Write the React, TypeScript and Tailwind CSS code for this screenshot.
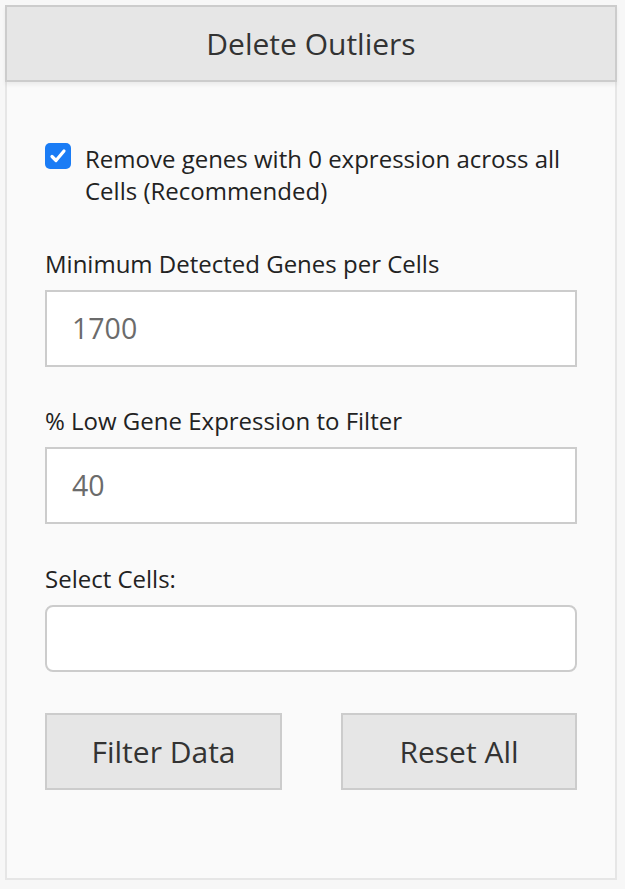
export default function App() {
  return (
    <div className="min-h-[889px] bg-[#f7f7f7] p-[5px] font-['Open_Sans',sans-serif] text-[#333]">
      <div className="w-[612px] h-[875px] border-2 border-[#e6e6e6] bg-[#fafafa]">
        <div className="-mx-[2px] -mt-[2px] h-[77px] border-2 border-[#cccccc] bg-[#e6e6e6] flex items-center justify-center text-[30px] shadow-[0_3px_4px_rgba(0,0,0,0.06)]">
          Delete Outliers
        </div>
        <div className="px-[38px] pt-[61px]">
          <label className="flex items-start gap-[14px] text-[24px] leading-[32px] text-[#222]">
            <span className="shrink-0 w-[26px] h-[26px] rounded-[5px] bg-[#1a7cf5] flex items-center justify-center">
              <svg width="18" height="18" viewBox="0 0 18 18" fill="none">
                <path d="M3 9.5 L7 13.5 L15 4" stroke="white" strokeWidth="3.2" strokeLinecap="round" strokeLinejoin="round" />
              </svg>
            </span>
            <span>Remove genes with 0 expression across all Cells (Recommended)</span>
          </label>

          <div className="mt-[41px] text-[24px] leading-[32px] text-[#222]">Minimum Detected Genes per Cells</div>
          <div className="mt-[10px] h-[77px] border-2 border-[#cccccc] bg-white flex items-center px-[25px] text-[28.5px] text-[#6b6b6b]">
            1700
          </div>

          <div className="mt-[38px] text-[24px] leading-[32px] text-[#222]">% Low Gene Expression to Filter</div>
          <div className="mt-[10px] h-[77px] border-2 border-[#cccccc] bg-white flex items-center px-[25px] text-[28.5px] text-[#6b6b6b]">
            40
          </div>

          <div className="mt-[39px] text-[24px] leading-[32px] text-[#222]">Select Cells:</div>
          <div className="mt-[10px] h-[67px] border-2 border-[#cccccc] bg-white rounded-[8px]" />

          <div className="mt-[41px] flex justify-between">
            <button className="w-[237px] h-[77px] border-2 border-[#cccccc] bg-[#e6e6e6] text-[30px] text-[#333]">
              Filter Data
            </button>
            <button className="w-[236px] h-[77px] border-2 border-[#cccccc] bg-[#e6e6e6] text-[30px] text-[#333]">
              Reset All
            </button>
          </div>
        </div>
      </div>
    </div>
  );
}
